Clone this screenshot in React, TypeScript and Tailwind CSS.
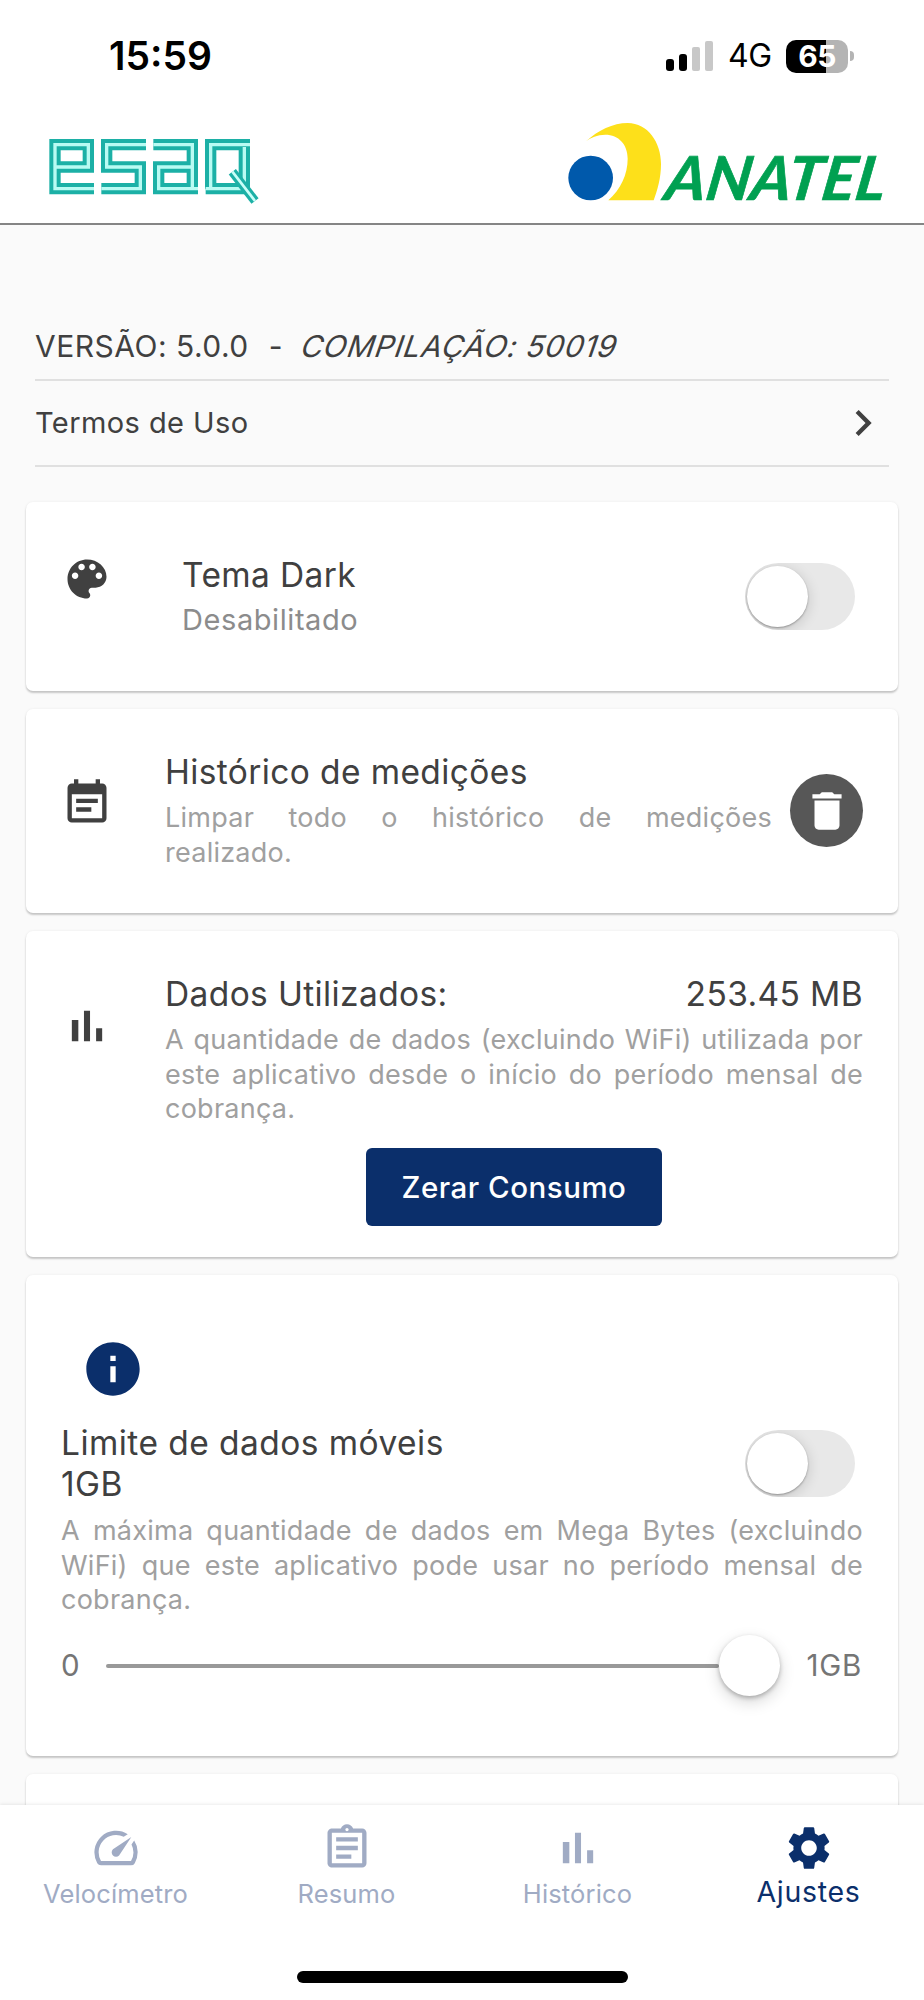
import { useState, type ReactNode } from "react";
import {
  MdEventNote,
  MdDelete,
  MdInfo,
  MdSpeed,
  MdOutlineAssignment,
  MdSettings,
  MdChevronRight,
} from "react-icons/md";

interface IconProps {
  size: number;
  className?: string;
}

const ESAQ_STROKES = [
  "M135 149 H18 V17 H118 V84 H18",
  "M291 17 H173 V84 H274 V149 H157",
  "M313 17 H430 V149",
  "M430 84 H329 V149 H447",
  "M603 17 H485 V149",
  "M470 149 H586 V24",
];

const EsaqLogo = () => (
  <svg width="212" height="68" viewBox="0 0 636 204" fill="none">
    {ESAQ_STROKES.map((d) => (
      <path key={d} d={d} stroke="#1cb0a6" strokeWidth="34" />
    ))}
    {ESAQ_STROKES.map((d) => (
      <path key={d} d={d} stroke="#b9fbf3" strokeWidth="10" />
    ))}
    <path d="M550 98 L618 186" stroke="#1cb0a6" strokeWidth="27" />
    <path d="M550 98 L618 186" stroke="#c9fff8" strokeWidth="8" />
  </svg>
);

const AnatelLogo = () => (
  <svg width="326" height="86" viewBox="0 0 978 258" className="overflow-visible">
    <path
      d="M54 61 C90 28 135 6 179 6 C240 6 279 65 279 128 C279 172 268 208 257 238 H121 C158 205 179 160 179 113 C179 70 152 41 112 41 C88 41 68 50 54 61 Z"
      fill="#fde01a"
    />
    <circle cx="68" cy="171" r="67" fill="#0059ab" />
    <text
      transform="translate(286 237) skewX(-9)"
      fontFamily="Lato, sans-serif"
      fontWeight="700"
      fontStyle="italic"
      fontSize="182"
      textLength="660"
      lengthAdjust="spacingAndGlyphs"
      fill="#00a051"
      stroke="#00a051"
      strokeWidth="2"
    >
      ANATEL
    </text>
  </svg>
);

const Palette = ({ size, className }: IconProps) => (
  <svg width={size} height={size} viewBox="0 0 24 24" fill="currentColor" className={className}>
    <path d="M12 3c-4.97 0-9 4.03-9 9s4.03 9 9 9c.83 0 1.5-.67 1.5-1.5 0-.39-.15-.74-.39-1.01-.23-.26-.38-.61-.38-.99 0-.83.67-1.5 1.5-1.5H16c2.76 0 5-2.24 5-5 0-4.42-4.03-8-9-8zm-5.5 9c-.83 0-1.5-.67-1.5-1.5S5.67 9 6.5 9 8 9.67 8 10.5 7.33 12 6.5 12zm3-4C8.67 8 8 7.33 8 6.5S8.67 5 9.5 5s1.5.67 1.5 1.5S10.33 8 9.5 8zm5 0c-.83 0-1.5-.67-1.5-1.5S13.67 5 14.5 5s1.5.67 1.5 1.5S15.33 8 14.5 8zm3 4c-.83 0-1.5-.67-1.5-1.5S16.67 9 17.5 9s1.5.67 1.5 1.5-.67 1.5-1.5 1.5z" />
  </svg>
);

const Bars = ({ size, className }: IconProps) => (
  <svg width={size} height={size} viewBox="0 0 24 24" fill="currentColor" className={className}>
    <path d="M5 9.2h3V19H5zM10.6 5h2.8v14h-2.8zm5.6 8H19v6h-2.8z" />
  </svg>
);

const StatusBar = () => (
  <div className="flex h-28 items-center pl-[109px] pr-[70px] text-black">
    <span className="text-[39px] font-semibold">15:59</span>
    <div className="ml-auto flex items-center">
      <div className="flex h-[30px] items-end gap-[5px]">
        <span className="h-3 w-2 rounded-[3px] bg-black" />
        <span className="h-[17px] w-2 rounded-[3px] bg-black" />
        <span className="h-6 w-2 rounded-[2px] bg-[#c8c8c8]" />
        <span className="h-[30px] w-2 rounded-[2px] bg-[#c8c8c8]" />
      </div>
      <span className="ml-[15px] w-[44px] text-[32px] tracking-[-0.3px]">4G</span>
      <div className="ml-[14px] flex h-[33px] w-[62px] items-center justify-center rounded-[10px] bg-[linear-gradient(90deg,#000_65%,#b4b4b4_65%)] text-[30px] leading-none font-bold tracking-[-0.5px] text-white">
        65
      </div>
      <span className="ml-0.5 h-[10px] w-1 rounded-r-full bg-[#b4b4b4]" />
    </div>
  </div>
);

const Card = ({ className, children }: { className: string; children?: ReactNode }) => (
  <section
    className={`rounded-[7px] bg-white shadow-[0_2px_2px_rgba(0,0,0,0.2),0_0_3px_rgba(0,0,0,0.06)] ${className}`}
  >
    {children}
  </section>
);

const Title = ({ children }: { children: ReactNode }) => (
  <h2 className="text-[33.5px] leading-[46px] tracking-[0.38px] text-[#404040]">{children}</h2>
);

const Description = ({ children }: { children: ReactNode }) => (
  <p className="text-justify text-[27px] leading-[34.7px] tracking-[0.25px] text-[#a0a0a0]">
    {children}
  </p>
);

const Toggle = ({ label }: { label: string }) => {
  const [on, setOn] = useState(false);
  return (
    <button
      role="switch"
      aria-checked={on}
      aria-label={label}
      onClick={() => setOn(!on)}
      className={`flex h-[67px] w-[110px] shrink-0 items-center overflow-hidden rounded-full px-0.5 ${
        on ? "justify-end bg-[#0b2f6b]" : "bg-[#e8e8e8]"
      }`}
    >
      <span className="size-[61px] rounded-full bg-white shadow-[0_3px_14px_rgba(0,0,0,0.16),0_1px_2px_rgba(0,0,0,0.3)]" />
    </button>
  );
};

const TABS = [
  { label: "Velocímetro", icon: MdSpeed },
  { label: "Resumo", icon: MdOutlineAssignment },
  { label: "Histórico", icon: Bars },
  { label: "Ajustes", icon: MdSettings },
];

const TabBar = ({ active }: { active: string }) => (
  <nav className="flex h-[195px] flex-col bg-white shadow-[0_-1px_3px_rgba(0,0,0,0.08)]">
    <div className="grid grid-cols-4 pt-[17px]">
      {TABS.map(({ label, icon: Icon }) => (
        <div
          key={label}
          className={`flex flex-col items-center ${
            label === active
              ? "text-[28.5px] leading-[36px] tracking-[0.7px] text-[#0b2f6b]"
              : "text-[25.5px] leading-[39px] tracking-[0.15px] text-[#a0abc4]"
          }`}
        >
          <Icon size={52} />
          <span>{label}</span>
        </div>
      ))}
    </div>
    <div className="mx-auto mt-auto mb-[17px] h-[12px] w-[331px] rounded-full bg-black" />
  </nav>
);

export default function App() {
  return (
    <div className="flex h-[2000px] w-[924px] flex-col overflow-hidden bg-[#fafafa] font-[Inter,sans-serif] text-[#404040]">
      <header className="h-[225px] shrink-0 border-b-2 border-[#858585] bg-white">
        <StatusBar />
        <div className="flex items-start justify-between pl-[49px] pr-[30px]">
          <div className="pt-[27px]">
            <EsaqLogo />
          </div>
          <div className="pt-[9px]">
            <AnatelLogo />
          </div>
        </div>
      </header>

      <main className="min-h-0 flex-1 overflow-hidden">
        <div className="mx-[35px] pt-[101px]">
          <div className="flex h-[55px] border-b-2 border-[#e0e0e0] text-[30px] leading-[40px]">
            <span className="tracking-[0.5px]">VERSÃO: 5.0.0</span>
            <span className="ml-[20px]">-</span>
            <span className="ml-[17px] -skew-x-[19deg] tracking-[0.7px]">COMPILAÇÃO: 50019</span>
          </div>
          <div className="flex h-[86px] items-center justify-between border-b-2 border-[#e0e0e0] text-[29px] tracking-[0.42px]">
            <span>Termos de Uso</span>
            <MdChevronRight size={52} />
          </div>
        </div>

        <div className="mx-[26px] mt-[35px] flex flex-col gap-[18px]">
          <Card className="flex h-[189px] pt-[50px] pr-[43px] pl-[35px]">
            <Palette size={52} className="mt-px" />
            <div className="ml-[69px] flex-1">
              <Title>Tema Dark</Title>
              <p className="mt-0.5 text-[29px] leading-[40px] tracking-[0.58px] text-[#8c8c8c]">
                Desabilitado
              </p>
            </div>
            <div className="pt-[11px]">
              <Toggle label="Tema Dark" />
            </div>
          </Card>

          <Card className="flex h-[204px] pt-[40px] pr-[35px] pl-[35px]">
            <MdEventNote size={52} className="mt-[28px] shrink-0" />
            <div className="ml-[52px] flex-1">
              <Title>Histórico de medições</Title>
              <div className="mt-[6px]">
                <Description>Limpar todo o histórico de medições realizado.</Description>
              </div>
            </div>
            <button
              aria-label="Limpar histórico"
              className="mt-[25px] ml-[18px] flex size-[73px] shrink-0 items-center justify-center rounded-full bg-[#575757] text-white"
            >
              <MdDelete size={50} />
            </button>
          </Card>

          <Card className="flex h-[326px] pt-[40px] pr-[35px] pl-[35px]">
            <Bars size={52} className="mt-[29px] shrink-0" />
            <div className="ml-[52px] flex flex-1 flex-col">
              <div className="flex justify-between">
                <Title>Dados Utilizados:</Title>
                <Title>253.45 MB</Title>
              </div>
              <div className="mt-[6px]">
                <Description>
                  A quantidade de dados (excluindo WiFi) utilizada por este aplicativo desde o
                  início do período mensal de cobrança.
                </Description>
              </div>
              <button className="mx-auto mt-[21px] h-[78px] w-[296px] rounded-[6px] bg-[#0b2f6b] text-[29.5px] font-medium tracking-[0.5px] text-white">
                Zerar Consumo
              </button>
            </div>
          </Card>

          <Card className="h-[481px] pt-[62px] pr-[35px] pl-[35px]">
            <MdInfo size={64} className="ml-[20px] text-[#0b2f6b]" />
            <div className="mt-[22px] flex justify-between pr-[8px]">
              <h2 className="text-[33.5px] leading-[41px] tracking-[0.45px] text-[#404040]">
                Limite de dados móveis
                <br />
                1GB
              </h2>
              <div className="pt-[7px]">
                <Toggle label="Limite de dados móveis" />
              </div>
            </div>
            <div className="mt-[9px]">
              <Description>
                A máxima quantidade de dados em Mega Bytes (excluindo WiFi) que este aplicativo
                pode usar no período mensal de cobrança.
              </Description>
            </div>
            <div className="mt-[17px] flex items-center text-[29.5px] text-[#757575]">
              <span className="w-[45px]">0</span>
              <div className="h-1 w-[613px] rounded-full bg-[#999]" />
              <div className="size-[61px] shrink-0 rounded-full bg-white shadow-[0_6px_16px_rgba(0,0,0,0.16),0_2px_4px_rgba(0,0,0,0.25)]" />
              <span className="mr-px ml-auto tracking-[0.7px]">1GB</span>
            </div>
          </Card>

          <Card className="h-[120px]" />
        </div>
      </main>

      <TabBar active="Ajustes" />
    </div>
  );
}
